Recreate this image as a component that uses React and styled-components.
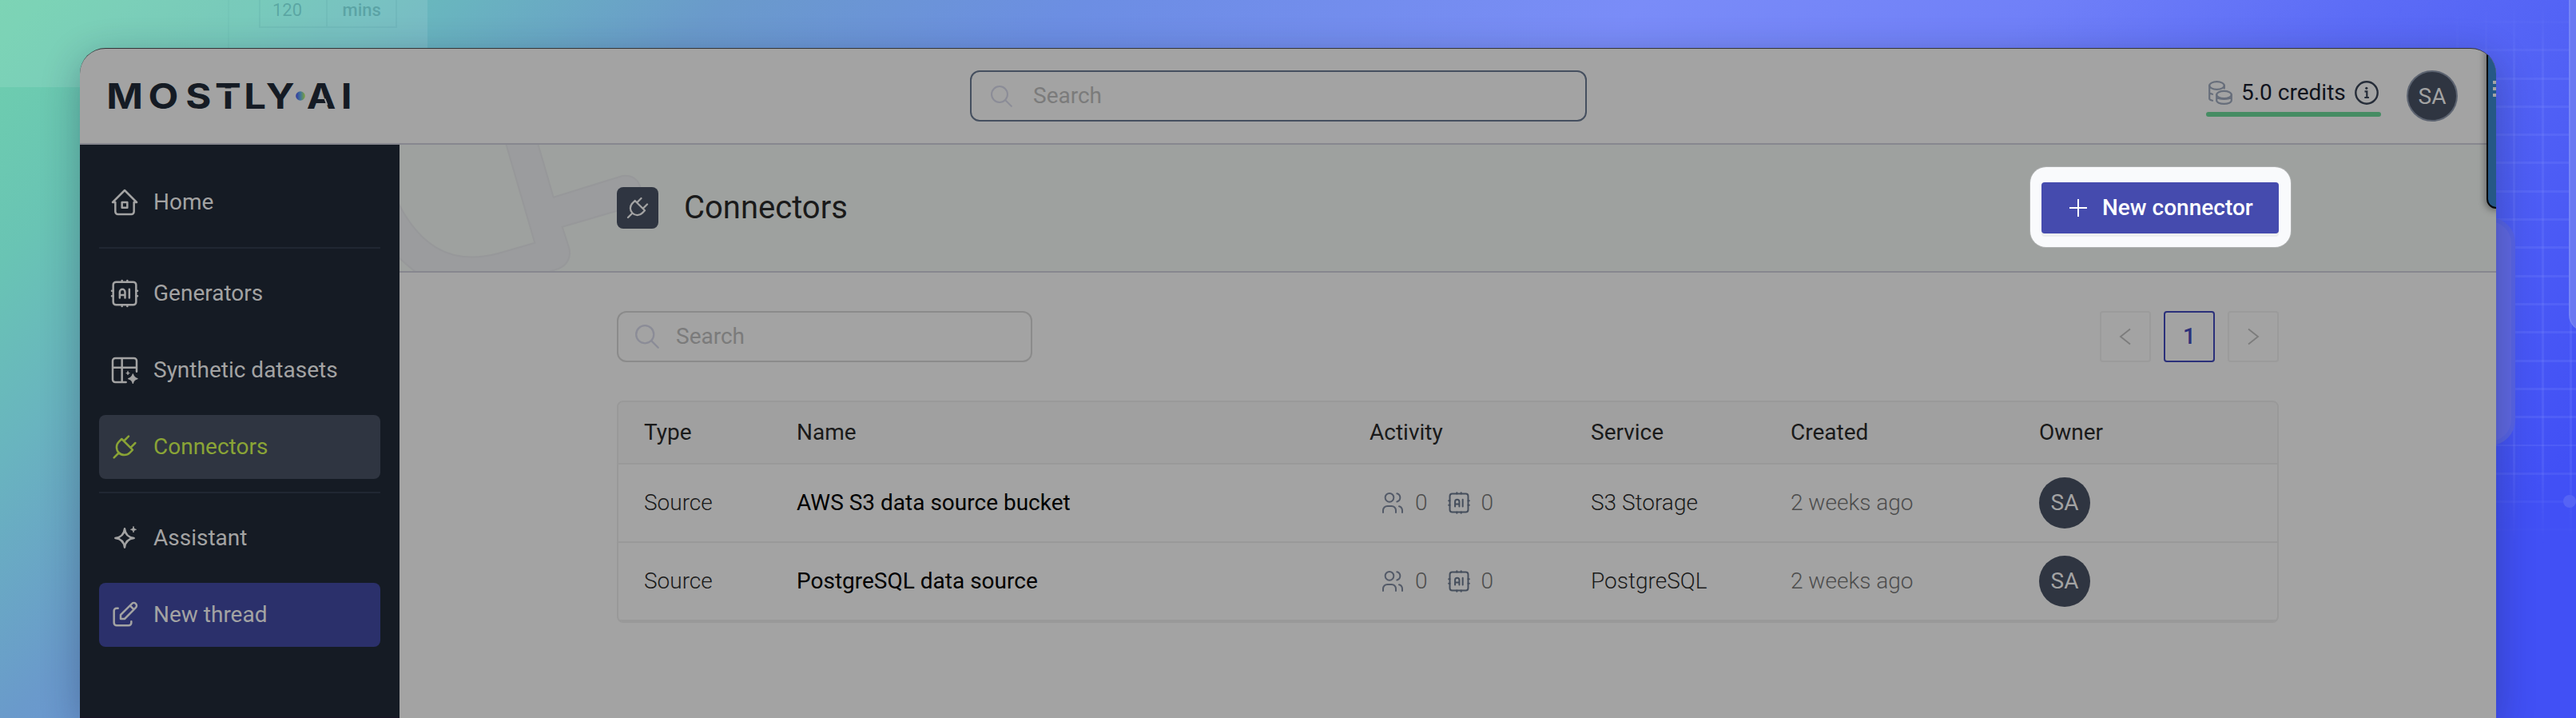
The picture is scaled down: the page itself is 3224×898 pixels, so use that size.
import React from "react";
import styled, { createGlobalStyle } from "styled-components";

const c = {
  surface: "#a3a3a3",
  banner: "#9ea19f",
  line: "#87878f",
  navy: "#151b24",
  slate: "#2f3541",
  text: "#1a1a1a",
  faint: "#999999",
};

const Global = createGlobalStyle`
  *, *::before, *::after { box-sizing: border-box; }
  html, body { margin: 0; padding: 0; overflow: hidden; }
  body { font-family: Roboto, "Liberation Sans", sans-serif; font-size: 28px; color: ${c.text}; }
`;

const Stage = styled.div`
  position: relative;
  width: 3224px;
  height: 898px;
  overflow: hidden;
  padding: 60px 100px 0;
  background: linear-gradient(135deg, #6fd0ad 0%, #69c4b4 8%, #69b4bf 14%, #6a9acb 22%, #6c8ee3 33%,
    #7a8cf8 50%, #7080f8 62%, #5c6cf6 72%, #4f5ff5 81%, #4150f5 92%);
`;

const GhostCard = styled.div`
  position: absolute;
  left: 0;
  top: 0;
  width: 535px;
  height: 109px;
  padding-left: 285px;
  background: rgba(255, 255, 255, 0.1);
`;

const GhostPane = styled.div`
  height: 80px;
  padding-left: 37px;
  border-left: 2px solid rgba(60, 130, 140, 0.06);
`;

const GhostFields = styled.div`
  display: flex;
  width: 173px;
  height: 35px;
  border: 2px solid rgba(60, 130, 140, 0.1);
  border-top: 0;
  line-height: 25px;
  font-size: 22px;
  color: rgba(50, 120, 125, 0.42);
`;

const GhostField = styled.span`
  flex: 1;
  padding-left: ${(p) => (p.$strong ? 19 : 15)}px;
  font-weight: ${(p) => (p.$strong ? 500 : 400)};
  border-right: ${(p) => (p.$strong ? 0 : 2)}px solid rgba(60, 130, 140, 0.1);
`;

const GridLines = styled.div`
  position: absolute;
  left: 2990px;
  top: 0;
  width: 234px;
  height: 680px;
  background:
    repeating-linear-gradient(90deg, transparent 0 13px, rgba(130, 145, 255, 0.19) 13px 16px, transparent 16px 35.5px),
    repeating-linear-gradient(180deg, transparent 0 26px, rgba(130, 145, 255, 0.19) 26px 29px, transparent 29px 35.3px);
  mask-image: linear-gradient(90deg, transparent, #000 70%), linear-gradient(180deg, transparent, #000 12%, #000 85%, transparent);
  mask-composite: intersect;
`;

const GridDot = styled.div`
  position: absolute;
  left: 3208px;
  top: 619px;
  width: 16px;
  height: 16px;
  border-radius: 50%;
  background: #5563f5;
`;

const EdgePanel = styled.div`
  position: absolute;
  left: 3215px;
  top: -20px;
  width: 40px;
  height: 434px;
  border-radius: 0 0 0 20px;
  border-left: 2px solid rgba(130, 145, 250, 0.5);
  background: #6b79f2;
`;

const BackPanel = styled.div`
  position: absolute;
  left: 3080px;
  top: 272px;
  width: 68px;
  height: 285px;
  border-radius: 32px;
  border: 5px solid #5763e4;
  background: #6068e2;
`;

const Window = styled.div`
  position: relative;
  height: 838px;
  border-radius: 32px 32px 0 0;
  border-top: 1px solid #333437;
  background: ${c.surface};
  box-shadow: 0 12px 48px rgba(20, 30, 60, 0.32);
  overflow: hidden;
  display: flex;
  flex-direction: column;
`;

const TopBar = styled.header`
  height: 120px;
  flex: none;
  display: flex;
  align-items: center;
  padding: 0 48px 0 26px;
  border-bottom: 2px solid ${c.line};
`;

const LogoArea = styled.div`
  width: 1088px;
  height: 60px;
  flex: none;
`;

const Label = styled.span`
  display: block;
  padding-bottom: 2px;
  white-space: nowrap;
`;

const SearchBox = styled.label`
  display: flex;
  align-items: center;
  width: ${(p) => p.$width}px;
  height: 64px;
  flex: none;
  padding-left: ${(p) => p.$pad}px;
  gap: ${(p) => p.$gap}px;
  border: 2px solid ${(p) => p.$border};
  border-radius: 12px;
  color: #7b7b7b;
  svg { color: #8b8c97; flex: none; }
`;

const Credits = styled.div`
  margin-left: auto;
  width: 219px;
  height: 46px;
  display: flex;
  flex-direction: column;
  justify-content: space-between;
  margin-top: 6px;
`;

const CreditsRow = styled.div`
  display: flex;
  align-items: center;
  height: 32px;
  padding: 0 3px;
  color: #10131d;
  span { margin-left: 11px; flex: 1; }
`;

const CreditsBar = styled.div`
  height: 6px;
  border-radius: 3px;
  background: #468c63;
`;

const Avatar = styled.div`
  width: 64px;
  height: 64px;
  flex: none;
  border-radius: 50%;
  border: ${(p) => (p.$ring ? 2 : 0)}px solid #5c6370;
  margin-left: ${(p) => (p.$ring ? 32 : 0)}px;
  padding-bottom: ${(p) => (p.$ring ? 0 : 2)}px;
  display: flex;
  align-items: center;
  justify-content: center;
  background: ${c.slate};
  color: ${c.surface};
`;

const Body = styled.div`
  flex: 1;
  display: flex;
  min-height: 0;
`;

const Sidebar = styled.nav`
  width: 400px;
  flex: none;
  padding: 32px 24px 0;
  display: flex;
  flex-direction: column;
  gap: 16px;
  background: ${c.navy};
  border-bottom: 1px solid #1a1426;
`;

const NavLink = styled.a`
  display: flex;
  align-items: center;
  gap: 16px;
  height: 80px;
  flex: none;
  padding-left: 12px;
  border-radius: 8px;
  color: ${(p) => (p.$active ? "#8aa436" : c.surface)};
  background: ${(p) => (p.$active ? c.slate : p.$primary ? "#2b306b" : "transparent")};
`;

const Rule = styled.div`
  height: 2px;
  flex: none;
  background: #202732;
`;

const Main = styled.main`
  flex: 1;
  display: flex;
  flex-direction: column;
`;

const Banner = styled.section`
  position: relative;
  height: 160px;
  flex: none;
  display: flex;
  align-items: center;
  padding: 0 272px;
  background: ${c.banner};
  border-bottom: 2px solid ${c.line};
`;

const Watermark = styled.svg`
  position: absolute;
  left: 0;
  top: 0;
`;

const Badge = styled.div`
  position: relative;
  width: 52px;
  height: 52px;
  border-radius: 8px;
  display: flex;
  align-items: center;
  justify-content: center;
  background: ${c.slate};
  color: ${c.surface};
`;

const Title = styled.h1`
  margin: 0 auto 0 32px;
  padding-bottom: 2px;
  font-size: 40px;
  font-weight: 400;
`;

const Spotlight = styled.div`
  padding: 19px 15px 17px 14px;
  margin: 0 -15px 2px 0;
  border-radius: 20px;
  background: #f9fafc;
  box-shadow: 0 0 0 1px rgba(190, 192, 194, 0.5);
`;

const PrimaryButton = styled.button`
  display: flex;
  align-items: center;
  width: 297px;
  height: 64px;
  padding: 0 0 0 34px;
  gap: 18px;
  border: 0;
  border-radius: 4px;
  font: 500 28px Roboto, "Liberation Sans", sans-serif;
  color: #fff;
  background: #454bae;
  box-shadow: 0 4px 0 #edeff0;
`;

const Content = styled.section`
  width: 2080px;
  margin: 48px auto 0;
`;

const Tools = styled.div`
  display: flex;
  justify-content: space-between;
  margin-bottom: 48px;
`;

const Pager = styled.div`
  display: flex;
  gap: 16px;
`;

const PageButton = styled.button`
  width: 64px;
  height: 64px;
  padding: 0;
  border: 2px solid ${(p) => (p.$current ? "#2b307a" : "#9b9b9b")};
  border-radius: 4px;
  display: flex;
  align-items: center;
  justify-content: center;
  background: transparent;
  font: 500 28px Roboto, "Liberation Sans", sans-serif;
  color: ${(p) => (p.$current ? "#2b307a" : "#7c7c7c")};
`;

const Table = styled.div`
  border: 2px solid ${c.faint};
  border-radius: 8px;
  overflow: hidden;
`;

const Row = styled.div`
  display: grid;
  grid-template-columns: 191px 717px 277px 250px 311px 1fr;
  align-items: center;
  height: ${(p) => (p.$head ? 78 : 98)}px;
  padding: 0 0 0 32px;
  border-bottom: 2px solid ${c.faint};
  background: ${(p) => (p.$head ? "#a0a0a0" : "transparent")};
`;

const Cell = styled.div`
  padding-bottom: 2px;
  color: ${(p) => p.$color || c.text};
  font-weight: ${(p) => p.$weight || 400};
  white-space: nowrap;
`;

const Activity = styled.div`
  display: flex;
  align-items: center;
  padding-left: 13px;
  gap: 12px;
  font-weight: 300;
  color: #4d4d4d;
  svg { color: #535a68; }
  svg + span + svg { margin-left: 11px; color: #454e5c; }
`;

const DockTab = styled.div`
  position: absolute;
  left: 3012px;
  top: -1px;
  width: 30px;
  height: 201px;
  border: 2px solid #050608;
  border-radius: 0 0 0 12px;
  background: #265885;
  box-shadow: -2px 2px 8px rgba(0, 0, 0, 0.35);
  padding: 39px 0 0 6px;
  display: flex;
  flex-direction: column;
  gap: 4px;
`;

const Grip = styled.span`
  width: 4px;
  height: 4px;
  background: ${c.surface};
`;

const Icon = ({ size = 40, sw = 1.5, children }) => (
  <svg width={size} height={size} viewBox="0 0 24 24" fill="none" stroke="currentColor" strokeWidth={sw} strokeLinecap="round" strokeLinejoin="round">
    {children}
  </svg>
);

const HomeIcon = () => (
  <Icon>
    <path d="M5 12H3l9-9 9 9h-2M5 12v7a2 2 0 0 0 2 2h10a2 2 0 0 0 2-2v-7M10 12h4v4h-4z" />
  </Icon>
);

const ChipIcon = ({ size }) => (
  <Icon size={size}>
    <rect x="3.4" y="3.4" width="17.2" height="17.2" rx="2.2" />
    <path d="M10 2.4v1M14 2.4v1M10 20.6v1M14 20.6v1M2.4 10h1M2.4 14h1M20.6 10h1M20.6 14h1" />
    <path d="M8.3 15.3v-4.4a2 2 0 0 1 4 0v4.4M8.3 13.2h4M15.5 8.9v6.4" />
  </Icon>
);

const DatasetIcon = () => (
  <Icon>
    <path d="M21 13V5a2 2 0 0 0-2-2H5a2 2 0 0 0-2 2v14a2 2 0 0 0 2 2h8M3 10h18M10 3v18" />
    <path fill="currentColor" strokeWidth="0.8" d="M18.2 15c.5 2.1 1.2 2.8 3.4 3.4c-2.2.6-2.9 1.3-3.4 3.4c-.5-2.1-1.2-2.8-3.4-3.4c2.2-.6 2.9-1.3 3.4-3.4z" />
    <path fill="currentColor" strokeWidth="0.4" d="M14.4 12.8c.2.9.5 1.2 1.4 1.4c-.9.2-1.2.5-1.4 1.4c-.2-.9-.5-1.2-1.4-1.4c.9-.2 1.2-.5 1.4-1.4z" />
  </Icon>
);

const PlugIcon = ({ size }) => (
  <Icon size={size}>
    <path d="M9.785 6l8.215 8.215l-2.054 2.054a5.81 5.81 0 1 1 -8.215 -8.215l2.054 -2.054zM4 20l3.5 -3.5M15 4l-3.5 3.5M20 9l-3.5 3.5" />
  </Icon>
);

const SparkIcon = () => (
  <Icon>
    <path d="M12 5c.5 4.3 2.7 6.5 7 7c-4.3.5-6.5 2.7-7 7c-.5-4.3-2.7-6.5-7-7c4.3-.5 6.5-2.7 7-7z" />
    <path fill="currentColor" strokeWidth="0.6" d="M18.6 3.5c.3 1.4.7 1.8 2.1 2.1c-1.4.3-1.8.7-2.1 2.1c-.3-1.4-.7-1.8-2.1-2.1c1.4-.3 1.8-.7 2.1-2.1z" />
  </Icon>
);

const EditIcon = () => (
  <Icon>
    <path d="M7 7h-1a2 2 0 0 0 -2 2v9a2 2 0 0 0 2 2h9a2 2 0 0 0 2 -2v-1M20.385 6.585a2.1 2.1 0 0 0 -2.97 -2.97l-8.415 8.385v3h3l8.385 -8.415zM16 5l3 3" />
  </Icon>
);

const UsersIcon = () => (
  <Icon size={32}>
    <circle cx="9" cy="7" r="4" />
    <path d="M3 21v-2a4 4 0 0 1 4 -4h4a4 4 0 0 1 4 4v2M16 3.13a4 4 0 0 1 0 7.75M21 21v-2a4 4 0 0 0 -3 -3.85" />
  </Icon>
);

const SearchIcon = ({ size }) => (
  <svg width={size} height={size} viewBox="0 0 28 28" fill="none" stroke="currentColor" strokeWidth="2.1" strokeLinecap="round">
    <circle cx="11.4" cy="11.4" r="10.3" />
    <path d="M18.8 18.8l8 8" />
  </svg>
);

const CoinsIcon = () => (
  <svg width="30" height="30" viewBox="0 0 30 30" fill="none" stroke="#676e7b" strokeWidth="2.2" strokeLinecap="round">
    <ellipse cx="10.5" cy="6" rx="9.3" ry="4.8" />
    <path d="M1.2 6v16.5c0 1 1.5 1.8 3.8 2.3M1.2 14.5c0 1 1.5 1.8 3.8 2.3M19.8 6v3.5" />
    <ellipse cx="19.5" cy="17.5" rx="9.3" ry="4.7" />
    <path d="M10.2 17.5v7c0 2.5 4 4.4 9.3 4.4s9.3-1.9 9.3-4.4v-7M10.5 20c1.2 1.9 4.8 3 9 3s7.8-1.1 9-3" />
  </svg>
);

const InfoIcon = () => (
  <svg width="30" height="30" viewBox="0 0 30 30" fill="none" stroke="#262d39" strokeWidth="2.4">
    <circle cx="15" cy="15" r="13.7" />
    <path d="M12.5 13.3h2.8v7.5M12.3 21h5.6" strokeWidth="2.2" />
    <circle cx="14.8" cy="9.3" r="1.6" fill="#262d39" stroke="none" />
  </svg>
);

const Logo = () => (
  <svg width="330" height="60" viewBox="-10 -10 330 60">
    <defs>
      <linearGradient id="dot">
        <stop offset="0" stopColor="#3338a0" />
        <stop offset="0.5" stopColor="#41749a" />
        <stop offset="1" stopColor="#7ba33a" />
      </linearGradient>
    </defs>
    <text
      y="35.7"
      x="-2.5 43.8 85.1 117.8 149.8 174.2 219.2 257.3"
      transform="scale(1.13 1)"
      fontFamily="Inter, sans-serif"
      fontWeight="700"
      fontSize="43.5"
      fill={c.navy}
    >
      MOSTLYAI
    </text>
    <rect x="140" y="10.5" width="18" height="3.6" fill={c.surface} />
    <circle cx="240" cy="20" r="5.8" fill="url(#dot)" />
    <path d="M270.5 23.5l3 8" stroke={c.surface} strokeWidth="2" />
  </svg>
);

const Chevron = ({ d }) => (
  <svg width="16" height="22" viewBox="0 0 16 22" fill="none" stroke="currentColor" strokeWidth="1.8">
    <path d={d} />
  </svg>
);

const NavItem = ({ icon, children, ...rest }) => (
  <NavLink {...rest}>
    {icon}
    <Label>{children}</Label>
  </NavLink>
);

const rows = [
  { type: "Source", name: "AWS S3 data source bucket", service: "S3 Storage" },
  { type: "Source", name: "PostgreSQL data source", service: "PostgreSQL" },
];

export default function App() {
  return (
    <Stage>
      <Global />
      <GhostCard>
        <GhostPane>
          <GhostFields>
            <GhostField>120</GhostField>
            <GhostField $strong>mins</GhostField>
          </GhostFields>
        </GhostPane>
      </GhostCard>
      <GridLines />
      <GridDot />
      <EdgePanel />
      <BackPanel />
      <Window>
        <TopBar>
          <LogoArea>
            <Logo />
          </LogoArea>
          <SearchBox $width={772} $pad={24} $gap={26} $border="#454f5f">
            <SearchIcon size={27} />
            <Label>Search</Label>
          </SearchBox>
          <Credits>
            <CreditsRow>
              <CoinsIcon />
              <Label>5.0 credits</Label>
              <InfoIcon />
            </CreditsRow>
            <CreditsBar />
          </Credits>
          <Avatar $ring>SA</Avatar>
        </TopBar>
        <Body>
          <Sidebar>
            <NavItem icon={<HomeIcon />}>Home</NavItem>
            <Rule />
            <NavItem icon={<ChipIcon />}>Generators</NavItem>
            <NavItem icon={<DatasetIcon />}>Synthetic datasets</NavItem>
            <NavItem $active icon={<PlugIcon />}>Connectors</NavItem>
            <Rule />
            <NavItem icon={<SparkIcon />}>Assistant</NavItem>
            <NavItem $primary icon={<EditIcon />}>New thread</NavItem>
          </Sidebar>
          <Main>
            <Banner>
              <Watermark width="320" height="158" viewBox="0 0 320 158" fill="#9b9c9e" stroke="#97989a" strokeWidth="2">
                <path d="M133 -2L169.3 122.7L124.3 135.7C60 153 22 122 -4 68V138C4 146 12 153 24 162H178L199 155C209 151 215 142 212.5 130L203.7 102.7L285 79C310 70 306 36 279 39L192.7 65.7L173 -2Z" />
              </Watermark>
              <Badge><PlugIcon size={36} /></Badge>
              <Title>Connectors</Title>
              <Spotlight>
                <PrimaryButton>
                  <svg width="24" height="24" viewBox="0 0 24 24" stroke="#fff" strokeWidth="2">
                    <path d="M12 1v22M1 12h22" />
                  </svg>
                  <Label>New connector</Label>
                </PrimaryButton>
              </Spotlight>
            </Banner>
            <Content>
              <Tools>
                <SearchBox $width={520} $pad={21} $gap={21} $border="#8b8b8b">
                  <SearchIcon size={30} />
                  <Label>Search</Label>
                </SearchBox>
                <Pager>
                  <PageButton><Chevron d="M14 1.5L2 11l12 9.5" /></PageButton>
                  <PageButton $current><Label>1</Label></PageButton>
                  <PageButton><Chevron d="M2 1.5L14 11L2 20.5" /></PageButton>
                </Pager>
              </Tools>
              <Table>
                <Row $head>
                  {["Type", "Name", "Activity", "Service", "Created", "Owner"].map((h) => (
                    <Cell key={h}>{h}</Cell>
                  ))}
                </Row>
                {rows.map((r) => (
                  <Row key={r.name}>
                    <Cell $weight={300}>{r.type}</Cell>
                    <Cell $color="#000">{r.name}</Cell>
                    <Activity>
                      <UsersIcon />
                      <Label>0</Label>
                      <ChipIcon size={32} />
                      <Label>0</Label>
                    </Activity>
                    <Cell $weight={300}>{r.service}</Cell>
                    <Cell $weight={300} $color="#4d4d4d">2 weeks ago</Cell>
                    <Avatar>SA</Avatar>
                  </Row>
                ))}
              </Table>
            </Content>
          </Main>
        </Body>
        <DockTab>
          <Grip />
          <Grip />
          <Grip />
        </DockTab>
      </Window>
    </Stage>
  );
}
